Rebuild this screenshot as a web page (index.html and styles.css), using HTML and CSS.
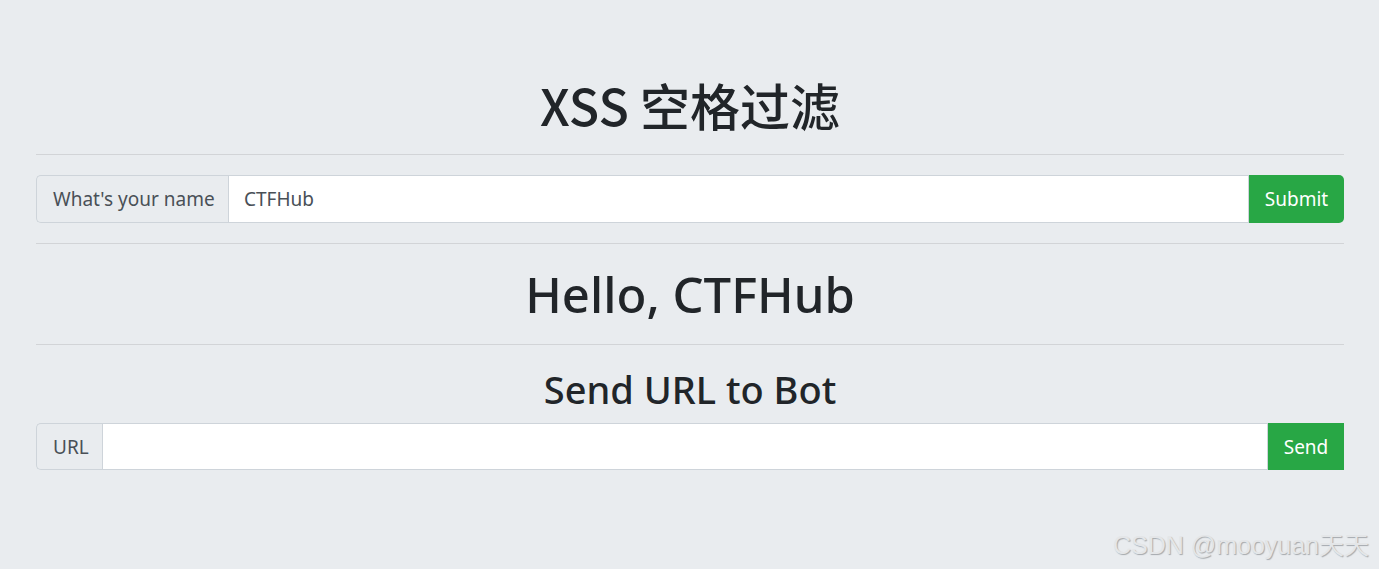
FILE: index.html
```html
<!DOCTYPE html>
<html lang="zh">
<head>
<meta charset="utf-8">
<title>XSS 空格过滤</title>
<link rel="stylesheet" href="styles.css">
</head>
<body>
<div class="page">
  <div class="container">
    <h1 class="title">XSS 空格过滤</h1>
    <hr class="rule">
    <form class="input-group">
      <span class="addon addon-name">What's your name</span>
      <input class="field" type="text" value="CTFHub">
      <button class="btn btn-submit" type="button">Submit</button>
    </form>
    <hr class="rule">
    <h1 class="hello">Hello, CTFHub</h1>
    <hr class="rule">
    <h2 class="subtitle">Send URL to Bot</h2>
    <form class="input-group">
      <span class="addon addon-url">URL</span>
      <input class="field" type="text" value="">
      <button class="btn btn-send" type="button">Send</button>
    </form>
  </div>
  <div class="watermark">CSDN @mooyuan天天</div>
</div>
</body>
</html>
```

FILE: styles.css
```css
html, body {
  margin: 0;
  padding: 0;
  background: #e9ecef;
}
.page {
  position: relative;
  width: 1379px;
  height: 569px;
  overflow: hidden;
  background: #e9ecef;
  font-family: "Noto Sans", "Noto Sans CJK SC", sans-serif;
  color: #212529;
}
.container {
  padding: 74px 35px 0 36px;
}
.title, .hello {
  margin: 0;
  font-size: 50px;
  font-weight: 500;
  line-height: 60px;
  text-align: center;
  font-family: "Noto Sans", "Noto Sans CJK SC", sans-serif;
}
.title {
  font-family: "Noto Sans CJK SC", "Noto Sans", sans-serif;
  font-weight: 500;
}
.hello {
  margin-top: 20px;
  font-size: 49px;
  line-height: 60px;
}
.subtitle {
  margin: 22px 0 0;
  font-size: 38px;
  font-weight: 500;
  line-height: 44px;
  text-align: center;
}
.rule {
  margin: 20px 0 0;
  border: 0;
  border-top: 1px solid #d2d4d7;
  height: 0;
}
.hello + .rule {
  margin-top: 20px;
}
.input-group {
  display: flex;
  margin: 20px 0 0;
  height: 48px;
}
.subtitle + .input-group {
  margin-top: 12px;
  height: 47px;
}
.addon {
  display: flex;
  align-items: center;
  box-sizing: border-box;
  padding: 0 16px 0 16px;
  background: #e9ecef;
  border: 1px solid #ced4da;
  border-right: 0;
  border-radius: 5px 0 0 5px;
  color: #495057;
  font-size: 19px;
  white-space: nowrap;
}
.addon-name {
  width: 192px;
}
.addon-url {
  width: 66px;
}
.field {
  flex: 1;
  min-width: 0;
  box-sizing: border-box;
  margin: 0;
  padding: 0 15px;
  border: 1px solid #ced4da;
  background: #fff;
  color: #495057;
  font-family: "Noto Sans", sans-serif;
  font-size: 19px;
  outline: none;
}
.btn {
  box-sizing: border-box;
  margin: 0;
  border: 0;
  background: #28a745;
  color: #fff;
  font-family: "Noto Sans", sans-serif;
  font-size: 19px;
  padding: 0;
  cursor: pointer;
}
.btn-submit {
  width: 95px;
  border-radius: 0 5px 5px 0;
}
.btn-send {
  width: 76px;
  border-radius: 0;
}
.watermark {
  position: absolute;
  right: 10px;
  top: 528px;
  font-family: "Liberation Sans", Arial, "Noto Sans CJK SC", sans-serif;
  font-size: 25px;
  line-height: 34px;
  color: #e4e6e8;
  text-shadow: 1px 1px 1px #a5a9ad;
  white-space: nowrap;
}
```
